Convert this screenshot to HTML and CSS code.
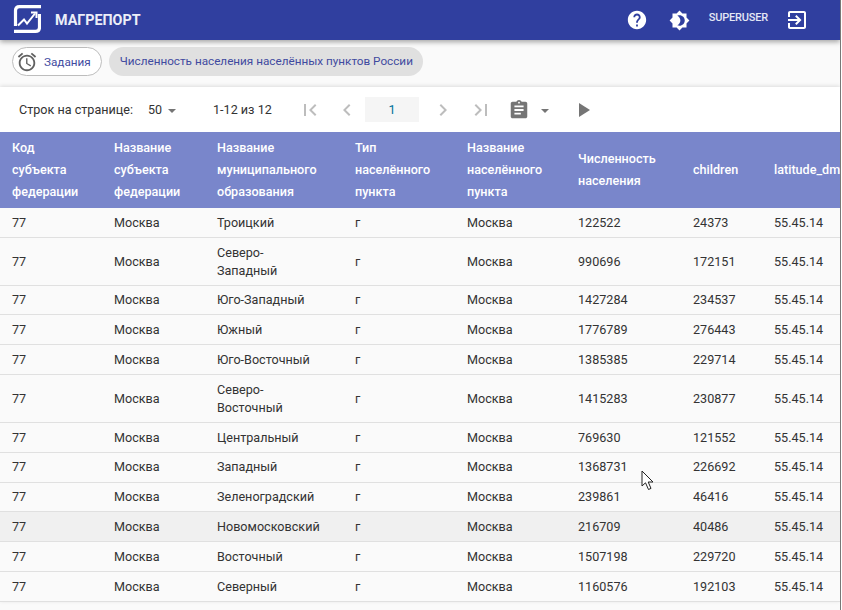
FILE: index.html
```html
<!DOCTYPE html>
<html lang="ru">
<head>
    <meta charset="UTF-8">
    <title>Магрепорт</title>
    <link rel="stylesheet" href="styles.css">
</head>
<body>
<div class="page">
    <header class="app-bar">
        <svg class="logo" width="28" height="28" viewBox="0 0 28 28" fill="none" stroke="#fff" stroke-width="3.200">
            <path d="M28 1.600H6.500Q2.500 1.600 2.500 5.600V21" />
            <path d="M1 26.400H22.500Q26.500 26.400 26.500 22.400V9" />
            <path d="M5 20.500L11 14.500L14 18.500L22 8.500" stroke-width="2" />
            <path d="M18 7.500H23.500V13" stroke-width="2" />
        </svg>
        <span class="brand">МАГРЕПОРТ</span>
        <span class="spacer"></span>
        <svg class="bar-icon" width="22" height="22" viewBox="0 0 24 24" fill="#fff">
            <path d="M12 2C6.480 2 2 6.480 2 12s4.480 10 10 10 10-4.480 10-10S17.520 2 12 2zm1 17h-2v-2h2v2zm2.070-7.750l-.9.920C13.450 12.900 13 13.500 13 15h-2v-.5c0-1.100.45-2.100 1.170-2.830l1.240-1.260c.37-.36.59-.86.59-1.410 0-1.100-.9-2-2-2s-2 .9-2 2H8c0-2.210 1.790-4 4-4s4 1.790 4 4c0 .88-.36 1.680-.93 2.250z" />
        </svg>
        <svg class="bar-icon theme" width="21" height="21" viewBox="0 0 24 24" fill="#fff">
            <path d="M20 8.690V4h-4.690L12 .69 8.690 4H4v4.690L.69 12 4 15.310V20h4.690L12 23.310 15.310 20H20v-4.690L23.310 12 20 8.690zM12 18c-.89 0-1.740-.2-2.500-.55C11.560 16.500 13 14.420 13 12s-1.440-4.500-3.500-5.450C10.260 6.200 11.110 6 12 6c3.310 0 6 2.690 6 6s-2.690 6-6 6z" />
        </svg>
        <span class="user">SUPERUSER</span>
        <svg class="bar-icon" width="24" height="24" viewBox="0 0 24 24" fill="#fff">
            <path d="M10.090 15.590L11.500 17l5-5-5-5-1.410 1.410L12.670 11H3v2h9.670l-2.580 2.590zM19 3H5c-1.110 0-2 .9-2 2v4h2V5h14v14H5v-4H3v4c0 1.100.89 2 2 2h14c1.100 0 2-.9 2-2V5c0-1.100-.9-2-2-2z" />
        </svg>
    </header>

    <nav class="tabs">
        <a class="chip chip-outline">
            <svg width="22" height="22" viewBox="0 0 24 24" fill="#616161">
                <path d="M22 5.720l-4.600-3.860-1.290 1.530 4.600 3.860L22 5.720zM7.880 3.390L6.600 1.860 2 5.710l1.290 1.530 4.590-3.850zM12.500 8H11v6l4.750 2.850.75-1.230-4-2.370V8zM12 4c-4.970 0-9 4.030-9 9s4.030 9 9 9 9-4.030 9-9-4.030-9-9-9zm0 16c-3.870 0-7-3.130-7-7s3.130-7 7-7 7 3.130 7 7-3.130 7-7 7z" />
            </svg>
            Задания
        </a>
        <a class="chip chip-filled">Численность населения населённых пунктов России</a>
    </nav>

    <main class="panel">
        <div class="toolbar">
            <span class="rows-label">Строк на странице:</span>
            <span class="rows-value">50</span>
            <span class="caret"></span>
            <span class="range">1-12 из 12</span>
            <svg class="pager first" width="24" height="24" viewBox="0 0 24 24" fill="#bdbdbd">
                <path d="M18.410 16.590L13.820 12l4.590-4.590L17 6l-6 6 6 6zM6 6h2v12H6z" />
            </svg>
            <svg class="pager prev" width="24" height="24" viewBox="0 0 24 24" fill="#bdbdbd">
                <path d="M15.410 7.410L14 6l-6 6 6 6 1.410-1.410L10.830 12z" />
            </svg>
            <span class="page-no">1</span>
            <svg class="pager next" width="24" height="24" viewBox="0 0 24 24" fill="#bdbdbd">
                <path d="M8.590 16.590L10 18l6-6-6-6-1.410 1.410L13.170 12z" />
            </svg>
            <svg class="pager last" width="24" height="24" viewBox="0 0 24 24" fill="#bdbdbd">
                <path d="M5.590 7.410L10.180 12l-4.590 4.590L7 18l6-6-6-6zM16 6h2v12h-2z" />
            </svg>
            <svg class="report" width="22" height="22" viewBox="0 0 24 24" fill="#757575">
                <path d="M19 3h-4.180C14.400 1.840 13.300 1 12 1c-1.300 0-2.400.84-2.820 2H5c-1.100 0-2 .9-2 2v14c0 1.100.9 2 2 2h14c1.100 0 2-.9 2-2V5c0-1.100-.9-2-2-2zm-7 0c.55 0 1 .45 1 1s-.45 1-1 1-1-.45-1-1 .45-1 1-1zm2 14H7v-2h7v2zm3-4H7v-2h10v2zm0-4H7V7h10v2z" />
            </svg>
            <span class="caret report-caret"></span>
            <svg class="play" width="24" height="24" viewBox="0 0 24 24" fill="#757575">
                <path d="M8 5v14l11-7z" />
            </svg>
        </div>

        <table class="data">
            <colgroup>
                <col class="c1"><col class="c2"><col class="c3"><col class="c4">
                <col class="c5"><col class="c6"><col class="c7"><col class="c8">
            </colgroup>
            <thead>
            <tr>
                <th>Код субъекта федерации</th>
                <th>Название субъекта федерации</th>
                <th>Название муниципального образования</th>
                <th>Тип населённого пункта</th>
                <th>Название населённого пункта</th>
                <th>Численность населения</th>
                <th>children</th>
                <th>latitude_dms</th>
            </tr>
            </thead>
            <tbody>
            <tr><td>77</td><td>Москва</td><td>Троицкий</td><td>г</td><td>Москва</td><td>122522</td><td>24373</td><td>55.45.14</td></tr>
            <tr><td>77</td><td>Москва</td><td>Северо-<br>Западный</td><td>г</td><td>Москва</td><td>990696</td><td>172151</td><td>55.45.14</td></tr>
            <tr><td>77</td><td>Москва</td><td>Юго-Западный</td><td>г</td><td>Москва</td><td>1427284</td><td>234537</td><td>55.45.14</td></tr>
            <tr><td>77</td><td>Москва</td><td>Южный</td><td>г</td><td>Москва</td><td>1776789</td><td>276443</td><td>55.45.14</td></tr>
            <tr><td>77</td><td>Москва</td><td>Юго-Восточный</td><td>г</td><td>Москва</td><td>1385385</td><td>229714</td><td>55.45.14</td></tr>
            <tr><td>77</td><td>Москва</td><td>Северо-<br>Восточный</td><td>г</td><td>Москва</td><td>1415283</td><td>230877</td><td>55.45.14</td></tr>
            <tr><td>77</td><td>Москва</td><td>Центральный</td><td>г</td><td>Москва</td><td>769630</td><td>121552</td><td>55.45.14</td></tr>
            <tr><td>77</td><td>Москва</td><td>Западный</td><td>г</td><td>Москва</td><td>1368731</td><td>226692</td><td>55.45.14</td></tr>
            <tr><td>77</td><td>Москва</td><td>Зеленоградский</td><td>г</td><td>Москва</td><td>239861</td><td>46416</td><td>55.45.14</td></tr>
            <tr class="hover"><td>77</td><td>Москва</td><td>Новомосковский</td><td>г</td><td>Москва</td><td>216709</td><td>40486</td><td>55.45.14</td></tr>
            <tr><td>77</td><td>Москва</td><td>Восточный</td><td>г</td><td>Москва</td><td>1507198</td><td>229720</td><td>55.45.14</td></tr>
            <tr><td>77</td><td>Москва</td><td>Северный</td><td>г</td><td>Москва</td><td>1160576</td><td>192103</td><td>55.45.14</td></tr>
            </tbody>
        </table>
    </main>

    <svg class="cursor" width="14" height="21" viewBox="0 0 14 21">
        <path d="M1 1V16L4.500 12.800L7.500 19.500L10 18.400L7.200 12H12z" fill="#fff" stroke="#222" stroke-width="1" />
    </svg>
</div>
</body>
</html>
```

FILE: styles.css
```css
html, body {
    margin: 0;
    height: 100%;
    overflow: hidden;
    background-color: #fff;
}

.page {
    position: relative;
    width: 840px;
    height: 610px;
    overflow: hidden;
    background-color: #fafafa;
    border-right: 1px solid #777;
    font-family: Roboto, sans-serif;
    font-size: 12.600px;
    color: #333;
}

.app-bar {
    display: flex;
    align-items: center;
    height: 40px;
    background-color: #303f9f;
    box-shadow: 0 2px 5px rgba(0, 0, 0, 0.35);
    color: #fff;
    position: relative;
}

.logo {
    margin-left: 13px;
    margin-top: -2px;
}

.brand {
    margin-left: 14px;
    font-size: 14.300px;
    font-weight: 700;
    color: #eceef8;
}

.spacer {
    flex: 1;
}

.bar-icon.theme {
    margin-left: 21.500px;
}

.user {
    margin-left: 18.500px;
    margin-right: 17px;
    margin-top: -5px;
    font-size: 11px;
    font-weight: 500;
    letter-spacing: -0.2px;
    color: #e4e7f5;
}

.app-bar > svg:last-child {
    margin-right: 31px;
}

.tabs {
    display: flex;
    gap: 7px;
    height: 47px;
    padding: 7px 12px 0;
    box-sizing: border-box;
}

.chip {
    display: flex;
    align-items: center;
    height: 29px;
    border-radius: 15px;
    box-sizing: border-box;
    font-size: 11.720px;
    color: #3f4a9f;
}

.chip-outline {
    gap: 6px;
    padding: 0 10px 0 3px;
    border: 1px solid #bdbdbd;
    background-color: #fff;
}

.chip-filled {
    padding: 0 10px 2px 11px;
    background-color: #e0e0e0;
}

.panel {
    background-color: #fff;
    box-shadow: 0 -1px 4px rgba(0, 0, 0, 0.12);
}

.toolbar {
    display: flex;
    align-items: center;
    height: 45px;
    padding-left: 19px;
}

.rows-label {
    width: 129px;
}

.rows-value {
    width: 20px;
    font-size: 12.500px;
}

.caret {
    width: 0;
    height: 0;
    border-left: 4.500px solid transparent;
    border-right: 4.500px solid transparent;
    border-top: 4.500px solid #757575;
    margin-top: 2px;
}

.range {
    margin-left: 37px;
    width: 85px;
}

.pager {
    flex: none;
}

.prev {
    margin-left: 13px;
}

.page-no {
    display: flex;
    justify-content: center;
    align-items: center;
    width: 54px;
    height: 25px;
    margin-left: 6px;
    background-color: #f5f5f5;
    color: #00729b;
}

.next {
    margin-left: 12px;
}

.last {
    margin-left: 14px;
}

.report {
    margin-left: 15px;
}

.report-caret {
    margin-left: 11px;
}

.play {
    margin-left: 22px;
}

.data {
    border-collapse: collapse;
    table-layout: fixed;
    width: 882px;
}

.c1 { width: 102px; }
.c2 { width: 103px; }
.c3 { width: 138px; }
.c4 { width: 112px; }
.c5 { width: 111px; }
.c6 { width: 115px; }
.c7 { width: 81px; }
.c8 { width: 120px; }

.data th {
    height: 76px;
    padding: 0 12px;
    box-sizing: border-box;
    background-color: #7986cb;
    color: #fff;
    font-weight: 500;
    line-height: 22px;
    text-align: left;
}

.data td {
    padding: 5.800px 12px 5.030px;
    line-height: 18px;
    border-bottom: 1px solid #e0e0e0;
    background-color: #fafafa;
    color: #333;
}

.hover td {
    background-color: #f0f0f0;
}

.cursor {
    position: absolute;
    left: 641px;
    top: 470px;
}
```
